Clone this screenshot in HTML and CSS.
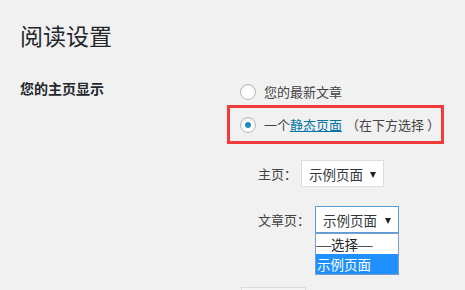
FILE: index.html
```html
<!DOCTYPE html>
<html lang="zh-CN">
<head>
<meta charset="utf-8">
<title>阅读设置</title>
<link rel="stylesheet" href="styles.css">
</head>
<body>
<div class="wrap">
  <h1 class="title">阅读设置</h1>
  <div class="form-row">
    <div class="th">您的主页显示</div>
    <div class="td">
      <label class="opt">
        <span class="radio"></span>
        <span class="opt-text">您的最新文章</span>
      </label>
      <div class="highlight">
        <label class="opt">
          <span class="radio checked"></span>
          <span class="opt-text">一个<a class="link" href="#">静态页面</a><span class="paren-l">（</span>在下方选择<span class="paren-r">）</span></span>
        </label>
      </div>
      <ul class="pages">
        <li class="page-row">
          <span class="page-label">主页：</span>
          <div class="select">示例页面<span class="arrow"></span></div>
        </li>
        <li class="page-row">
          <span class="page-label">文章页：</span>
          <div class="select-wrap">
            <div class="select focus">示例页面<span class="arrow"></span></div>
            <ul class="dropdown">
              <li class="dd-item"><span class="dash">—</span>选择<span class="dash">—</span></li>
              <li class="dd-item active">示例页面</li>
            </ul>
          </div>
        </li>
      </ul>
      <div class="button"></div>
    </div>
  </div>
</div>
</body>
</html>
```

FILE: styles.css
```css
html, body {
  margin: 0;
  padding: 0;
  background: #f1f1f1;
  height: 100%;
  overflow: hidden;
}
body {
  font-family: "Noto Sans CJK SC", "Liberation Sans", sans-serif;
  color: #23282d;
  font-size: 13px;
}
.wrap {
  padding-left: 20px;
}
.title {
  margin: 21px 0 0;
  font-size: 23px;
  font-weight: 400;
  line-height: 29px;
  color: #23282d;
}
.form-row {
  display: grid;
  grid-template-columns: 220px 1fr;
  margin-top: 28px;
}
.th {
  font-size: 14px;
  font-weight: 600;
  line-height: 20px;
}
.td {
  padding-top: 4px;
}
.opt {
  display: flex;
  align-items: center;
  height: 20px;
  color: #444;
  font-size: 13px;
}
.radio {
  width: 16px;
  height: 16px;
  box-sizing: border-box;
  border: 1px solid #b4b9be;
  border-radius: 50%;
  background: #fff;
  box-shadow: inset 0 1px 2px rgba(0,0,0,0.1);
  margin-right: 8px;
  display: flex;
  align-items: center;
  justify-content: center;
  flex: none;
}
.radio.checked::after {
  content: "";
  width: 6px;
  height: 6px;
  border-radius: 50%;
  background: #1e8cbe;
}
.opt-text {
  line-height: 20px;
  white-space: nowrap;
}
.paren-l {
  margin-left: 4px;
}
.paren-r {
  margin-left: 3px;
}
.link {
  color: #0073aa;
  text-decoration: underline;
}
.highlight {
  display: inline-block;
  margin: 3px 0 0 -13px;
  border: 3px solid #f23b3b;
  padding: 7px 0 6px 10px;
  width: 201px;
}
.pages {
  list-style: none;
  margin: 16px 0 0;
  padding: 0 0 0 18px;
}
.page-row {
  display: flex;
  align-items: center;
  height: 27px;
  margin-bottom: 19px;
}
.page-label {
  color: #444;
  font-size: 13px;
  width: 43px;
}
.page-row:nth-child(2) .page-label {
  width: 57px;
}
.select {
  box-sizing: border-box;
  height: 27px;
  width: 83px;
  background: #fff;
  border: 1px solid #ddd;
  display: flex;
  align-items: center;
  padding-left: 7px;
  font-size: 13.5px;
  color: #32373c;
  position: relative;
}
.select.focus {
  width: 84px;
  border-color: #5b9dd9;
}
.arrow {
  position: absolute;
  right: 7px;
  top: 11px;
  width: 0;
  height: 0;
  border-left: 3px solid transparent;
  border-right: 3px solid transparent;
  border-top: 6px solid #222;
}
.select-wrap {
  position: relative;
}
.dropdown {
  position: absolute;
  left: 0;
  top: 27px;
  width: 84px;
  box-sizing: border-box;
  margin: 0;
  padding: 0;
  list-style: none;
  border: 1px solid #7a9cd3;
  background: #fff;
}
.dd-item {
  display: flex;
  align-items: center;
  height: 20px;
  line-height: 20px;
  padding-left: 1px;
  font-size: 13.5px;
  color: #222;
}
.dash {
  display: inline-block;
  width: 14px;
  overflow: hidden;
  transform: scaleX(1.4);
  transform-origin: center;
  text-align: center;
}
.dd-item.active {
  background: #1e90ff;
  color: #fff;
}
.button {
  margin: 54px 0 0 1px;
  width: 65px;
  height: 3px;
  box-sizing: border-box;
  border: 1px solid #ddd;
  border-bottom: 0;
  background: #f4f4f4;
}
```
